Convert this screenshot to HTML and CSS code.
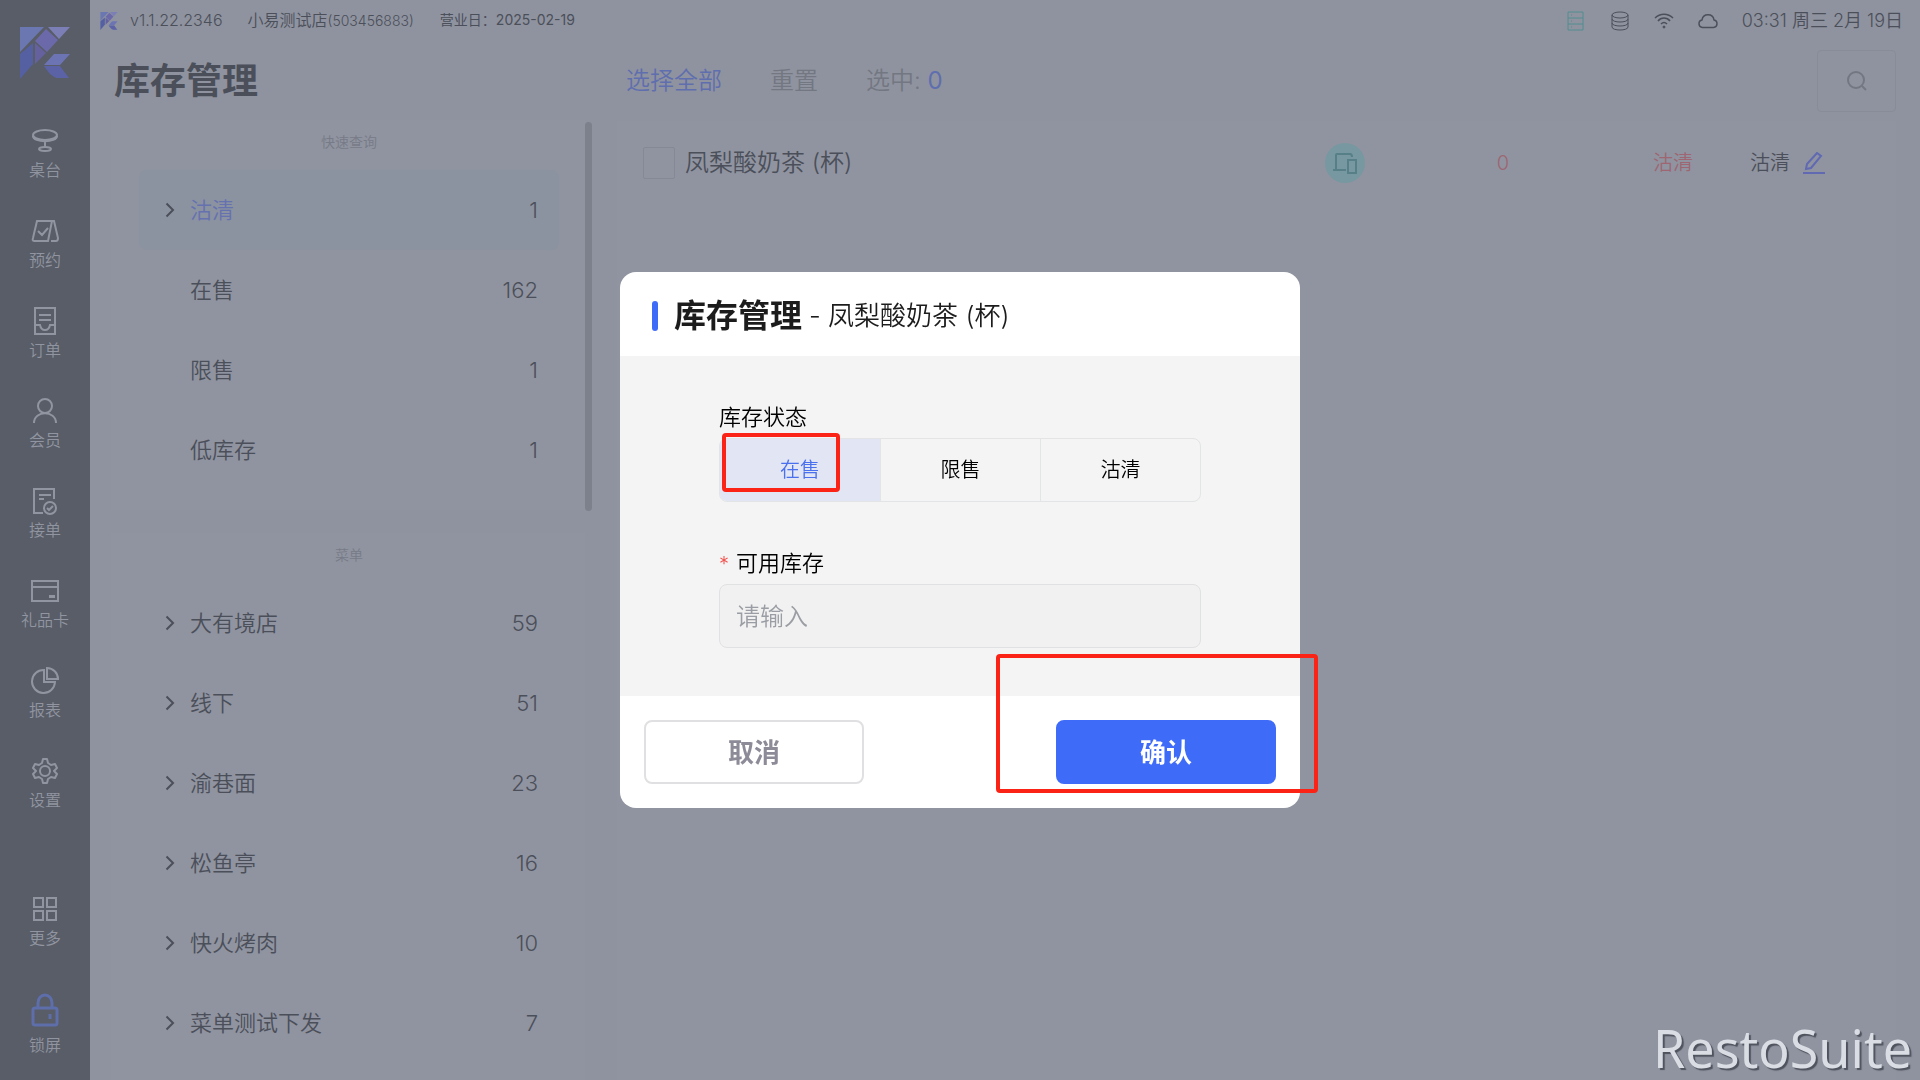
FILE: index.html
```html
<!DOCTYPE html>
<html lang="zh-CN">
<head>
    <meta charset="UTF-8">
    <meta name="viewport" content="width=device-width, initial-scale=1.0">
    <title>库存管理</title>
    <link rel="stylesheet" href="styles.css">
</head>
<body>
    <svg width="0" height="0" class="sprite" aria-hidden="true">
        <symbol id="logo" viewBox="0 0 50 52">
            <path d="M0 0h24L0 25z" fill="#6b77b0"/>
            <path d="M28 0h22L39 12z" fill="#7c7fb6"/>
            <path d="M26 2l12 11-11 12-12-11z" fill="#6c69aa"/>
            <path d="M13 16v21L0 52V27z" fill="#5560a3"/>
            <path d="M15 16l11 10-11 11z" fill="#65619f"/>
            <path d="M34 27h16L40 38H24z" fill="#6c74b4"/>
            <path d="M24 39h16l9 12H37c-5-1-9-6-13-12z" fill="#5b62a6"/>
        </symbol>
        <symbol id="chevron" viewBox="0 0 10 16">
            <path d="M1.500 1.500L8 8l-6.500 6.500" fill="none" stroke="currentColor" stroke-width="2"/>
        </symbol>
    </svg>

    <!-- 侧边栏 -->
    <nav class="sidebar">
        <svg class="sidebar-logo"><use href="#logo"/></svg>
        <a href="#" class="nav-item">
            <svg viewBox="0 0 28 28"><ellipse cx="14" cy="8" rx="12" ry="5"/><path d="M2 9c0 7 24 7 24 0M14 14v7"/><ellipse cx="14" cy="22" rx="6" ry="2"/></svg>
            <span>桌台</span>
        </a>
        <a href="#" class="nav-item">
            <svg viewBox="0 0 28 28"><path d="M6 4h15l-4 20H3q-2 0-1-3zM21 4h2l4 17q0 3-2 3h-5M7 14l4 4 6-7"/></svg>
            <span>预约</span>
        </a>
        <a href="#" class="nav-item">
            <svg viewBox="0 0 28 28"><path d="M4 1h20v26H4zM8 8h12M8 13h12M4 18h5q1 5 5 5t5-5h5"/></svg>
            <span>订单</span>
        </a>
        <a href="#" class="nav-item">
            <svg viewBox="0 0 28 28"><circle cx="14" cy="9" r="7"/><path d="M3 26c0-13 22-13 22 0"/></svg>
            <span>会员</span>
        </a>
        <a href="#" class="nav-item">
            <svg viewBox="0 0 28 28"><path d="M12 26H3V2h20v10M8 8h12M8 12h5"/><circle cx="19" cy="21" r="6"/><path d="M16 21l2 2 4-4"/></svg>
            <span>接单</span>
        </a>
        <a href="#" class="nav-item">
            <svg viewBox="0 0 28 28"><path d="M1 4h26v20H1zM1 10h26M18 19h6M18 20h6"/></svg>
            <span>礼品卡</span>
        </a>
        <a href="#" class="nav-item">
            <svg viewBox="0 0 28 28"><path d="M13 3v12h11A11.500 11.500 0 1 1 13 3z"/><path d="M16 1v11h11A11 11 0 0 0 16 1z"/></svg>
            <span>报表</span>
        </a>
        <a href="#" class="nav-item">
            <svg viewBox="0 0 28 28"><path d="M12 2h4l1 4 3 2 4-1 2 4-3 3 3 3-2 4-4-1-3 2-1 4h-4l-1-4-3-2-4 1-2-4 3-3-3-3 2-4 4 1 3-2z" stroke-linejoin="round"/><circle cx="14" cy="14" r="5"/></svg>
            <span>设置</span>
        </a>
        <a href="#" class="nav-item nav-more">
            <svg viewBox="0 0 28 28"><path d="M3 3h9v9H3zM16 3h9v9h-9zM3 16h9v9H3zM16 16h9v9h-9z"/></svg>
            <span>更多</span>
        </a>
        <a href="#" class="nav-item nav-lock">
            <svg viewBox="0 0 28 34"><rect x="2" y="15" width="24" height="17" rx="2"/><path d="M7 15v-5a7 8 0 0 1 14 0v5M19 21v5"/></svg>
            <span>锁屏</span>
        </a>
    </nav>

    <div class="main">
        <!-- 状态栏 -->
        <div class="topbar">
            <svg class="topbar-logo"><use href="#logo"/></svg>
            <span class="version">v1.1.22.2346</span>
            <span class="store">小易测试店<small>(503456883)</small></span>
            <span class="business-day">营业日：2025-02-19</span>
            <div class="status">
                <svg class="server" viewBox="0 0 20 20"><path d="M2 1h15v18H2zM2 7h15M2 13h15M5 4h1M5 10h1M5 16h1"/></svg>
                <svg viewBox="0 0 20 20"><ellipse cx="10" cy="4" rx="8" ry="3"/><path d="M2 4v12c0 4 16 4 16 0V4M2 8c0 4 16 4 16 0M2 12c0 4 16 4 16 0"/></svg>
                <svg viewBox="0 0 20 20"><path d="M1 7c5-5 13-5 18 0M4 10c3-4 9-4 12 0M7 13c2-2 4-2 6 0" stroke-width="1.500"/><circle cx="10" cy="16" r="1" fill="currentColor"/></svg>
                <svg viewBox="0 0 20 20"><path d="M4.500 16.500a3.800 3.800 0 0 1-.5-7.500C5 2 15 2 16 9a3.800 3.800 0 0 1-.5 7.500z" stroke-width="1.500"/></svg>
                <span class="clock">03:31 周三 2月 19日</span>
            </div>
        </div>

        <div class="content">
            <section class="categories">
                <h1>库存管理</h1>
                <div class="category-scroll">
                    <div class="category-cards">
                        <div class="card">
                            <h2>快速查询</h2>
                            <button class="category active"><svg><use href="#chevron"/></svg><span>沽清</span><b>1</b></button>
                            <button class="category"><i></i><span>在售</span><b>162</b></button>
                            <button class="category"><i></i><span>限售</span><b>1</b></button>
                            <button class="category"><i></i><span>低库存</span><b>1</b></button>
                        </div>
                        <div class="card">
                            <h2>菜单</h2>
                            <button class="category"><svg><use href="#chevron"/></svg><span>大有境店</span><b>59</b></button>
                            <button class="category"><svg><use href="#chevron"/></svg><span>线下</span><b>51</b></button>
                            <button class="category"><svg><use href="#chevron"/></svg><span>渝巷面</span><b>23</b></button>
                            <button class="category"><svg><use href="#chevron"/></svg><span>松鱼亭</span><b>16</b></button>
                            <button class="category"><svg><use href="#chevron"/></svg><span>快火烤肉</span><b>10</b></button>
                            <button class="category"><svg><use href="#chevron"/></svg><span>菜单测试下发</span><b>7</b></button>
                        </div>
                    </div>
                    <div class="scrollbar"></div>
                </div>
            </section>

            <section class="items">
                <div class="toolbar">
                    <button class="select-all">选择全部</button>
                    <button>重置</button>
                    <span>选中: <b>0</b></span>
                    <button class="search" aria-label="搜索">
                        <svg viewBox="0 0 20 20"><circle cx="9" cy="9" r="8"/><path d="M15 15l4 4"/></svg>
                    </button>
                </div>
                <div class="item-list">
                    <div class="item">
                        <label class="item-name"><input type="checkbox"><span>凤梨酸奶茶 (杯)</span></label>
                        <span class="device">
                            <svg viewBox="0 0 24 24"><path d="M3 18V4q0-1 1-1h13q2 0 2 3M0 19h13M15 9h8v13h-8z"/></svg>
                        </span>
                        <span class="quantity">0</span>
                        <span class="state">沽清</span>
                        <button class="edit">沽清
                            <svg viewBox="0 0 22 22"><path d="M3 17l1-5L14 1l4 3L8 16zM0 21h22"/></svg>
                        </button>
                    </div>
                </div>
            </section>
        </div>
    </div>

    <div class="watermark">RestoSuite</div>

    <!-- 库存弹窗 -->
    <div class="overlay">
        <form class="modal" role="dialog" aria-labelledby="modal-title">
            <div class="modal-header">
                <h2 id="modal-title">库存管理</h2>
                <span>- 凤梨酸奶茶 (杯)</span>
            </div>
            <div class="modal-body">
                <fieldset>
                    <legend>库存状态</legend>
                    <div class="segmented">
                        <label><input type="radio" name="stock" checked>在售</label>
                        <label><input type="radio" name="stock">限售</label>
                        <label><input type="radio" name="stock">沽清</label>
                    </div>
                </fieldset>
                <label class="field-label" for="available"><em>*</em>可用库存</label>
                <input type="text" id="available" class="field" placeholder="请输入">
            </div>
            <div class="modal-footer">
                <button type="button" class="btn">取消</button>
                <button type="button" class="btn btn-primary">确认</button>
            </div>
            <div class="mark mark-state"></div>
            <div class="mark mark-confirm"></div>
        </form>
    </div>
</body>
</html>
```

FILE: styles.css
```css
* {
    box-sizing: border-box;
}

body {
    display: flex;
    margin: 0;
    height: 100vh;
    overflow: hidden;
    background-color: #8f939f;
    color: #4b4f5a;
    font-family: Inter, "Noto Sans CJK SC", sans-serif;
    font-weight: 350;
    line-height: 1.2;
}

button,
input {
    font: inherit;
    color: inherit;
}

button {
    padding: 0;
    border: none;
    background: none;
    cursor: pointer;
}

svg {
    flex: none;
    fill: none;
    stroke: currentColor;
    stroke-width: 2;
}

.sprite {
    position: absolute;
}

#logo path {
    stroke: none;
}

/* 侧边栏 */
.sidebar {
    flex: none;
    display: flex;
    flex-direction: column;
    align-items: center;
    width: 90px;
    padding: 27px 0 23px;
    background-color: #585d67;
}

.sidebar-logo {
    width: 50px;
    height: 52px;
    margin-bottom: 48px;
}

.nav-item {
    display: flex;
    flex-direction: column;
    align-items: center;
    gap: 3px;
    height: 90px;
    color: #9195a1;
    font-size: 16px;
    line-height: 24px;
    text-decoration: none;
}

.nav-item svg {
    width: 28px;
    height: 28px;
}

.nav-more {
    height: 64px;
    margin-top: auto;
    margin-bottom: 34px;
}

.nav-lock {
    gap: 6px;
    height: 64px;
}

.nav-lock svg {
    height: 34px;
    color: #5d6eaa;
    stroke-width: 3;
}

.main {
    flex: 1;
    display: flex;
    flex-direction: column;
    min-width: 0;
}

/* 状态栏 */
.topbar {
    flex: none;
    display: flex;
    align-items: center;
    height: 41px;
    padding: 0 17px 0 10px;
    white-space: nowrap;
}

.topbar-logo {
    width: 18px;
    height: 18px;
    margin-right: 12px;
}

.version {
    margin-right: 25px;
    font-size: 16px;
}

.store {
    margin-right: 26px;
    font-size: 16px;
}

.store small {
    font-size: 14px;
}

.business-day {
    font-size: 14px;
    font-weight: 400;
}

.status {
    display: flex;
    align-items: center;
    gap: 24px;
    margin-left: auto;
}

.status svg {
    width: 20px;
    height: 20px;
    stroke-width: 1;
}

.status .server {
    color: #4f8e8e;
}

.clock {
    font-size: 18px;
}

.content {
    flex: 1;
    display: flex;
    gap: 25px;
    min-height: 0;
    padding: 0 24px 0 21px;
}

/* 分类 */
.categories {
    flex: none;
    display: flex;
    flex-direction: column;
    width: 481px;
}

.categories h1 {
    flex: none;
    margin: 0;
    padding-left: 3px;
    height: 79px;
    font-size: 36px;
    font-weight: 700;
    line-height: 80px;
}

.category-scroll {
    display: flex;
    min-height: 0;
}

.category-cards {
    flex: 1;
    display: flex;
    flex-direction: column;
    gap: 23px;
    overflow: hidden;
}

.card {
    flex: none;
    padding: 0 26px 20px 28px;
    background-color: #9094a0;
}

.card h2 {
    margin: 0;
    height: 50px;
    color: #777b87;
    font-size: 14px;
    font-weight: 350;
    line-height: 44px;
    text-align: center;
}

.category {
    display: flex;
    align-items: center;
    width: 100%;
    height: 80px;
    padding: 0 21px 0 26px;
    border-radius: 8px;
    font-size: 22px;
}

.category svg,
.category i {
    width: 10px;
    height: 16px;
    margin-right: 15px;
}

.category b {
    margin-left: auto;
    font-weight: 350;
}

.category.active {
    background-color: #8b93a1;
}

.category.active span {
    color: #6671af;
}

.scrollbar {
    width: 7px;
    height: 389px;
    margin-top: 2px;
    border-radius: 4px;
    background-color: #7d818c;
}

/* 菜品列表 */
.items {
    flex: 1;
    display: flex;
    flex-direction: column;
}

.toolbar {
    display: flex;
    align-items: center;
    gap: 48px;
    height: 80px;
    padding-left: 9px;
    color: #737782;
    font-size: 24px;
}

.toolbar b {
    color: #5f6eae;
    font-weight: 400;
}

.select-all {
    color: #5f6eae;
}

.search {
    display: flex;
    align-items: center;
    justify-content: center;
    width: 79px;
    height: 62px;
    margin-left: auto;
    border: 1px solid #888c98;
    border-radius: 4px;
}

.search svg {
    width: 20px;
    height: 20px;
}

.item-list {
    flex: 1;
    background-color: #9094a0;
}

.item {
    display: grid;
    grid-template-columns: minmax(0, 1fr) 40px 144px 184px 168px;
    align-items: center;
    height: 84px;
    padding: 0 35px 0 26px;
    font-size: 20px;
}

.item-name {
    display: flex;
    align-items: center;
    gap: 10px;
    font-size: 24px;
}

.item-name input {
    appearance: none;
    width: 32px;
    height: 32px;
    margin: 0;
    border: 1px solid #858995;
    border-radius: 2px;
}

.device {
    display: flex;
    align-items: center;
    justify-content: center;
    height: 40px;
    border-radius: 50%;
    background-color: #7798a0;
    color: #567f87;
}

.device svg {
    width: 24px;
    height: 24px;
}

.quantity,
.state {
    color: #9d6672;
    text-align: right;
}

.edit {
    display: flex;
    align-items: center;
    justify-content: flex-end;
    gap: 13px;
    height: 62px;
    padding-right: 36px;
}

.edit svg {
    width: 22px;
    height: 22px;
    color: #6069b2;
}

.watermark {
    position: fixed;
    right: 8px;
    bottom: 0;
    color: #dadee4;
    font-family: "Noto Sans", sans-serif;
    font-size: 52px;
    font-weight: 400;
    line-height: 64px;
    text-shadow: 2px 2px 1px #4f535e;
}

/* 弹窗 */
.overlay {
    position: fixed;
    inset: 0;
    display: flex;
    align-items: center;
    justify-content: center;
}

.modal {
    position: relative;
    width: 680px;
    border-radius: 16px;
    background-color: #fff;
    color: #000;
}

.modal-header {
    display: flex;
    align-items: center;
    gap: 7px;
    height: 84px;
    padding: 4px 32px 0;
    color: #1c1c1c;
    font-size: 26px;
}

.modal-header h2 {
    display: flex;
    align-items: center;
    gap: 16px;
    margin: 0;
    font-size: 32px;
    font-weight: 700;
}

.modal-header h2::before {
    content: "";
    width: 6px;
    height: 30px;
    border-radius: 3px;
    background-color: #3f6bf9;
}

.modal-body {
    padding: 44px 99px 48px;
    background-color: #f4f4f4;
    font-size: 22px;
}

fieldset {
    margin: 0 0 44px;
    padding: 0;
    border: none;
}

legend,
.field-label {
    display: block;
    height: 38px;
    padding: 0;
    line-height: 34px;
}

.segmented {
    display: grid;
    grid-template-columns: repeat(3, 1fr);
    height: 64px;
    border: 1px solid #e3e4e6;
    border-radius: 8px;
    overflow: hidden;
    font-size: 20px;
}

.segmented label {
    display: flex;
    align-items: center;
    justify-content: center;
    cursor: pointer;
}

.segmented label + label {
    border-left: 1px solid #e3e4e6;
}

.segmented label:has(:checked) {
    background-color: #e1e5f4;
    color: #4a70ee;
}

.segmented input {
    position: absolute;
    opacity: 0;
}

.field-label em {
    margin-right: 7px;
    color: #f0534f;
    font-style: normal;
    font-size: 20px;
}

.field {
    display: block;
    width: 100%;
    height: 64px;
    padding: 0 16px;
    border: 1px solid #e0e1e3;
    border-radius: 8px;
    background-color: #f1f1f1;
    font-size: 24px;
}

.field::placeholder {
    color: #9a9da3;
}

.modal-footer {
    display: flex;
    justify-content: space-between;
    padding: 24px;
}

.btn {
    width: 220px;
    height: 64px;
    padding-top: 2px;
    border: 2px solid #e0e0e2;
    border-radius: 8px;
    color: #8c8b97;
    font-size: 26px;
    font-weight: 700;
}

.btn-primary {
    border-color: #3f6bf9;
    background-color: #3f6bf9;
    color: #fff;
}

/* 标注框 */
.mark {
    position: absolute;
    border: 4px solid #fb2216;
    border-radius: 4px;
    pointer-events: none;
}

.mark-state {
    top: 161px;
    left: 102px;
    width: 118px;
    height: 59px;
}

.mark-confirm {
    top: 382px;
    right: -18px;
    width: 322px;
    height: 139px;
}
```
